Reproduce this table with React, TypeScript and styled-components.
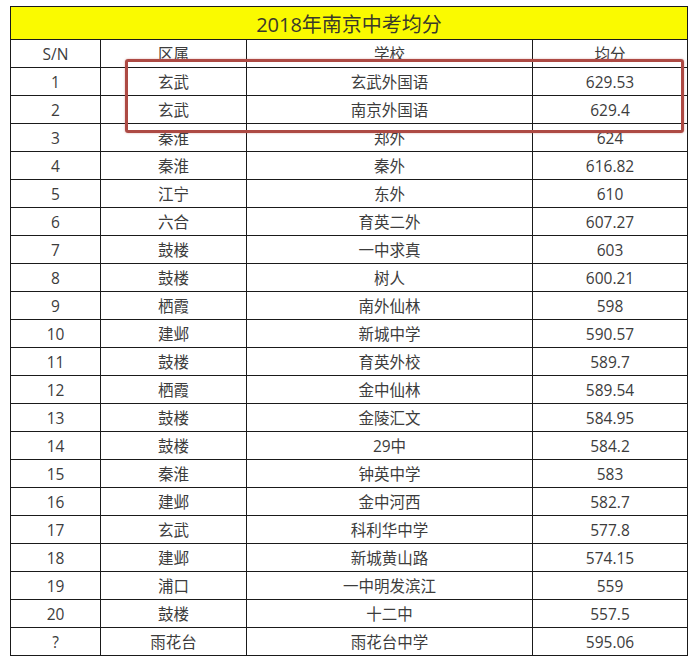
import React from 'react'
import styled, { createGlobalStyle } from 'styled-components'

const GlobalStyle = createGlobalStyle`
  html, body {
    margin: 0;
    padding: 0;
    background: #ffffff;
  }
  body {
    font-family: "Open Sans", "Noto Sans CJK SC", sans-serif;
    color: #333333;
  }
`

const rows: [string, string, string, string][] = [
  ['1', '玄武', '玄武外国语', '629.53'],
  ['2', '玄武', '南京外国语', '629.4'],
  ['3', '秦淮', '郑外', '624'],
  ['4', '秦淮', '秦外', '616.82'],
  ['5', '江宁', '东外', '610'],
  ['6', '六合', '育英二外', '607.27'],
  ['7', '鼓楼', '一中求真', '603'],
  ['8', '鼓楼', '树人', '600.21'],
  ['9', '栖霞', '南外仙林', '598'],
  ['10', '建邺', '新城中学', '590.57'],
  ['11', '鼓楼', '育英外校', '589.7'],
  ['12', '栖霞', '金中仙林', '589.54'],
  ['13', '鼓楼', '金陵汇文', '584.95'],
  ['14', '鼓楼', '29中', '584.2'],
  ['15', '秦淮', '钟英中学', '583'],
  ['16', '建邺', '金中河西', '582.7'],
  ['17', '玄武', '科利华中学', '577.8'],
  ['18', '建邺', '新城黄山路', '574.15'],
  ['19', '浦口', '一中明发滨江', '559'],
  ['20', '鼓楼', '十二中', '557.5'],
  ['?', '雨花台', '雨花台中学', '595.06'],
]

const Page = styled.div`
  padding: 6px 0 0 10px;
`

const Sheet = styled.div`
  position: relative;
  width: 677px;
`

const Table = styled.table`
  border-collapse: collapse;
  table-layout: fixed;
  width: 677px;
  font-family: "Open Sans", "Noto Sans CJK SC", sans-serif;
`

const TitleCell = styled.th`
  background: #fafa00;
  border: 1px solid #1a1a1a;
  height: 32px;
  padding: 0;
  font-size: 20px;
  font-weight: 400;
  color: #3a3a2a;
  text-align: center;
  vertical-align: middle;
`

const Cell = styled.td`
  border: 1px solid #1a1a1a;
  height: 27px;
  padding: 0;
  font-size: 15.5px;
  color: #3c3c3c;
  text-align: center;
  vertical-align: middle;
  white-space: nowrap;
`

// red marker drawn over the first two rows
const Highlight = styled.div`
  position: absolute;
  left: 115px;
  top: 53px;
  width: 553px;
  height: 68px;
  border: 3px solid #ad4a44;
  border-radius: 3px;
  box-shadow: 0 0 2px rgba(173, 74, 68, 0.5);
  pointer-events: none;
`

export default function App() {
  return (
    <>
      <GlobalStyle />
      <Page>
        <Sheet>
          <Table>
            <colgroup>
              <col style={{ width: 90 }} />
              <col style={{ width: 146 }} />
              <col style={{ width: 286 }} />
              <col style={{ width: 155 }} />
            </colgroup>
            <thead>
              <tr>
                <TitleCell colSpan={4}>2018年南京中考均分</TitleCell>
              </tr>
            </thead>
            <tbody>
              <tr>
                <Cell>S/N</Cell>
                <Cell>区属</Cell>
                <Cell>学校</Cell>
                <Cell>均分</Cell>
              </tr>
              {rows.map((r) => (
                <tr key={r[0] + r[2]}>
                  <Cell>{r[0]}</Cell>
                  <Cell>{r[1]}</Cell>
                  <Cell>{r[2]}</Cell>
                  <Cell>{r[3]}</Cell>
                </tr>
              ))}
            </tbody>
          </Table>
          <Highlight />
        </Sheet>
      </Page>
    </>
  )
}
